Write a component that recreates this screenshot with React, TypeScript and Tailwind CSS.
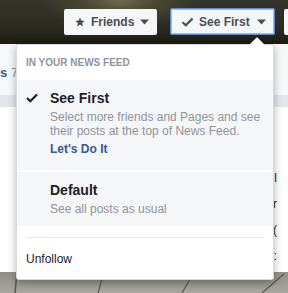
import React from "react";

function Caret({ className = "" }: { className?: string }) {
  return (
    <svg width="9" height="6" viewBox="0 0 9 6" className={`shrink-0 ${className}`}>
      <path d="M0 0.5 L9 0.5 L4.5 5.5 Z" fill="#4b4f56" />
    </svg>
  );
}

export default function App() {
  return (
    <div
      className="relative w-[288px] h-[293px] overflow-hidden bg-white"
      style={{ fontFamily: '"Liberation Sans", Arial, sans-serif' }}
    >
      {/* cover photo band */}
      <div className="h-[44px] bg-[radial-gradient(ellipse_80px_28px_at_120px_0px,#716b4f_0%,#4a4733_45%,transparent_100%),linear-gradient(180deg,#35342a_0%,#2d2c22_60%,#1c1b12_100%)] flex items-start pl-[64px] pt-[9px] gap-[13px]">
        <div className="shrink-0 h-[26px] w-[93px] bg-[#f5f6f7] rounded-[2px] flex items-center pl-[11px]">
          <svg width="10" height="10" viewBox="0 0 24 24" className="shrink-0 mr-[6px]">
            <path
              d="M12 1.5l3.2 7.1 7.8.8-5.8 5.2 1.7 7.7L12 18.3l-6.9 4 1.7-7.7L1 9.4l7.8-.8z"
              fill="#4b4f56"
            />
          </svg>
          <span className="text-[12px] font-bold text-[#4b4f56] leading-none whitespace-nowrap">Friends</span>
          <Caret className="ml-[6px]" />
        </div>
        <div className="shrink-0 h-[27px] -mt-[1px] w-[105px] bg-[#f5f6f7] rounded-[2px] border border-[#5b8bd8] shadow-[inset_0_0_0_1px_#9db8ec] flex items-center pl-[10px]">
          <svg width="13" height="10" viewBox="0 0 13 10" className="shrink-0 mr-[5px]">
            <path d="M1.5 5.2 L4.8 8.3 L11.5 1.6" stroke="#4b4f56" strokeWidth="2.2" fill="none" />
          </svg>
          <span className="text-[12px] font-bold text-[#4b4f56] leading-none whitespace-nowrap">See First</span>
          <Caret className="ml-[7px]" />
        </div>
        <div className="shrink-0 h-[26px] w-[20px] bg-[#f5f6f7] rounded-[2px] -ml-[4px] flex items-center pl-[5px]">
          <div className="w-[8px] h-[10px] rounded-full bg-[#4b4f56]" />
        </div>
      </div>

      {/* page content behind */}
      <div className="h-[228px] bg-white flex flex-col">
        <div className="h-[51px] bg-[#f7f8fa] flex items-center pt-[6px] gap-[4px]">
          <span className="text-[13px] font-bold text-[#365899] leading-none">s</span>
          <span className="text-[12px] text-[#90949c] leading-none">7</span>
        </div>
        <div className="h-[12px] bg-[#e4e6ea]" />
        <div className="h-[48px] bg-white" />
        <div className="flex-1 bg-white flex flex-col items-end gap-[8px] pt-[14px] text-[12px] text-[#1d2129]">
          <span className="mr-[11px]">l</span>
          <span className="mr-[11px]">r</span>
          <span className="mr-[11px]">(</span>
          <span className="mr-[11px]">:</span>
        </div>
      </div>

      {/* bottom photo */}
      <div className="h-[21px] bg-[linear-gradient(180deg,#8f8f88_0%,#a8a8a0_100%)] relative">
        <svg width="288" height="21" viewBox="0 0 288 21" className="absolute inset-0">
          <path d="M15 21 L17 0" stroke="#55554e" strokeWidth="1.5" />
          <path d="M98 21 L104 0" stroke="#5a5a52" strokeWidth="1.2" />
          <path d="M182 21 L194 0" stroke="#5a5a52" strokeWidth="1.2" />
          <path d="M262 21 L284 2" stroke="#5a5a52" strokeWidth="1.2" />
        </svg>
      </div>

      {/* dropdown menu */}
      <div className="absolute left-[16px] top-[44px] w-[258px] h-[236px] bg-white border border-[rgba(0,0,0,0.15)] rounded-b-[3px] shadow-[0_3px_8px_rgba(0,0,0,0.3)] flex flex-col">
        <svg
          width="16"
          height="8"
          viewBox="0 0 16 8"
          className="absolute -top-[8px] left-[232px]"
        >
          <path d="M0 8 L8 0 L16 8 Z" fill="#ffffff" />
          <path d="M0 8 L8 0 L16 8" fill="none" stroke="rgba(0,0,0,0.15)" />
        </svg>
        <div className="h-[35px] pl-[9px] pt-[12px] text-[10px] font-bold text-[#90949c] leading-[12px] uppercase">
          In your news feed
        </div>
        <div className="bg-[#f5f6f7] h-[90px] pt-[9px] pl-[9px] flex">
          <div className="w-[24px] h-[18px] flex items-center">
            <svg width="12" height="10" viewBox="0 0 12 10">
              <path d="M1 5 L4.3 8.2 L11 1.4" stroke="#1d2129" strokeWidth="2.2" fill="none" />
            </svg>
          </div>
          <div className="flex flex-col">
            <span className="text-[14px] font-bold text-[#1d2129] leading-[18px]">See First</span>
            <span className="mt-[3px] text-[12px] text-[#90949c] leading-[14px]">
              Select more friends and Pages and see
              <br />
              their posts at the top of News Feed.
            </span>
            <span className="mt-[4px] text-[12px] font-bold text-[#365899] leading-[14px]">
              Let's Do It
            </span>
          </div>
        </div>
        <div className="bg-[#f5f6f7] h-[54px] mt-[2px] pt-[9px] pl-[33px] flex flex-col">
          <span className="text-[14px] font-bold text-[#1d2129] leading-[18px]">Default</span>
          <span className="mt-[3px] text-[12px] text-[#90949c] leading-[14px]">See all posts as usual</span>
        </div>
        <div className="mt-[11px] mx-[9px] h-px bg-[#e5e6e9]" />
        <div className="pl-[9px] mt-[14px] text-[12px] text-[#1d2129] leading-[14px]">Unfollow</div>
      </div>
    </div>
  );
}
